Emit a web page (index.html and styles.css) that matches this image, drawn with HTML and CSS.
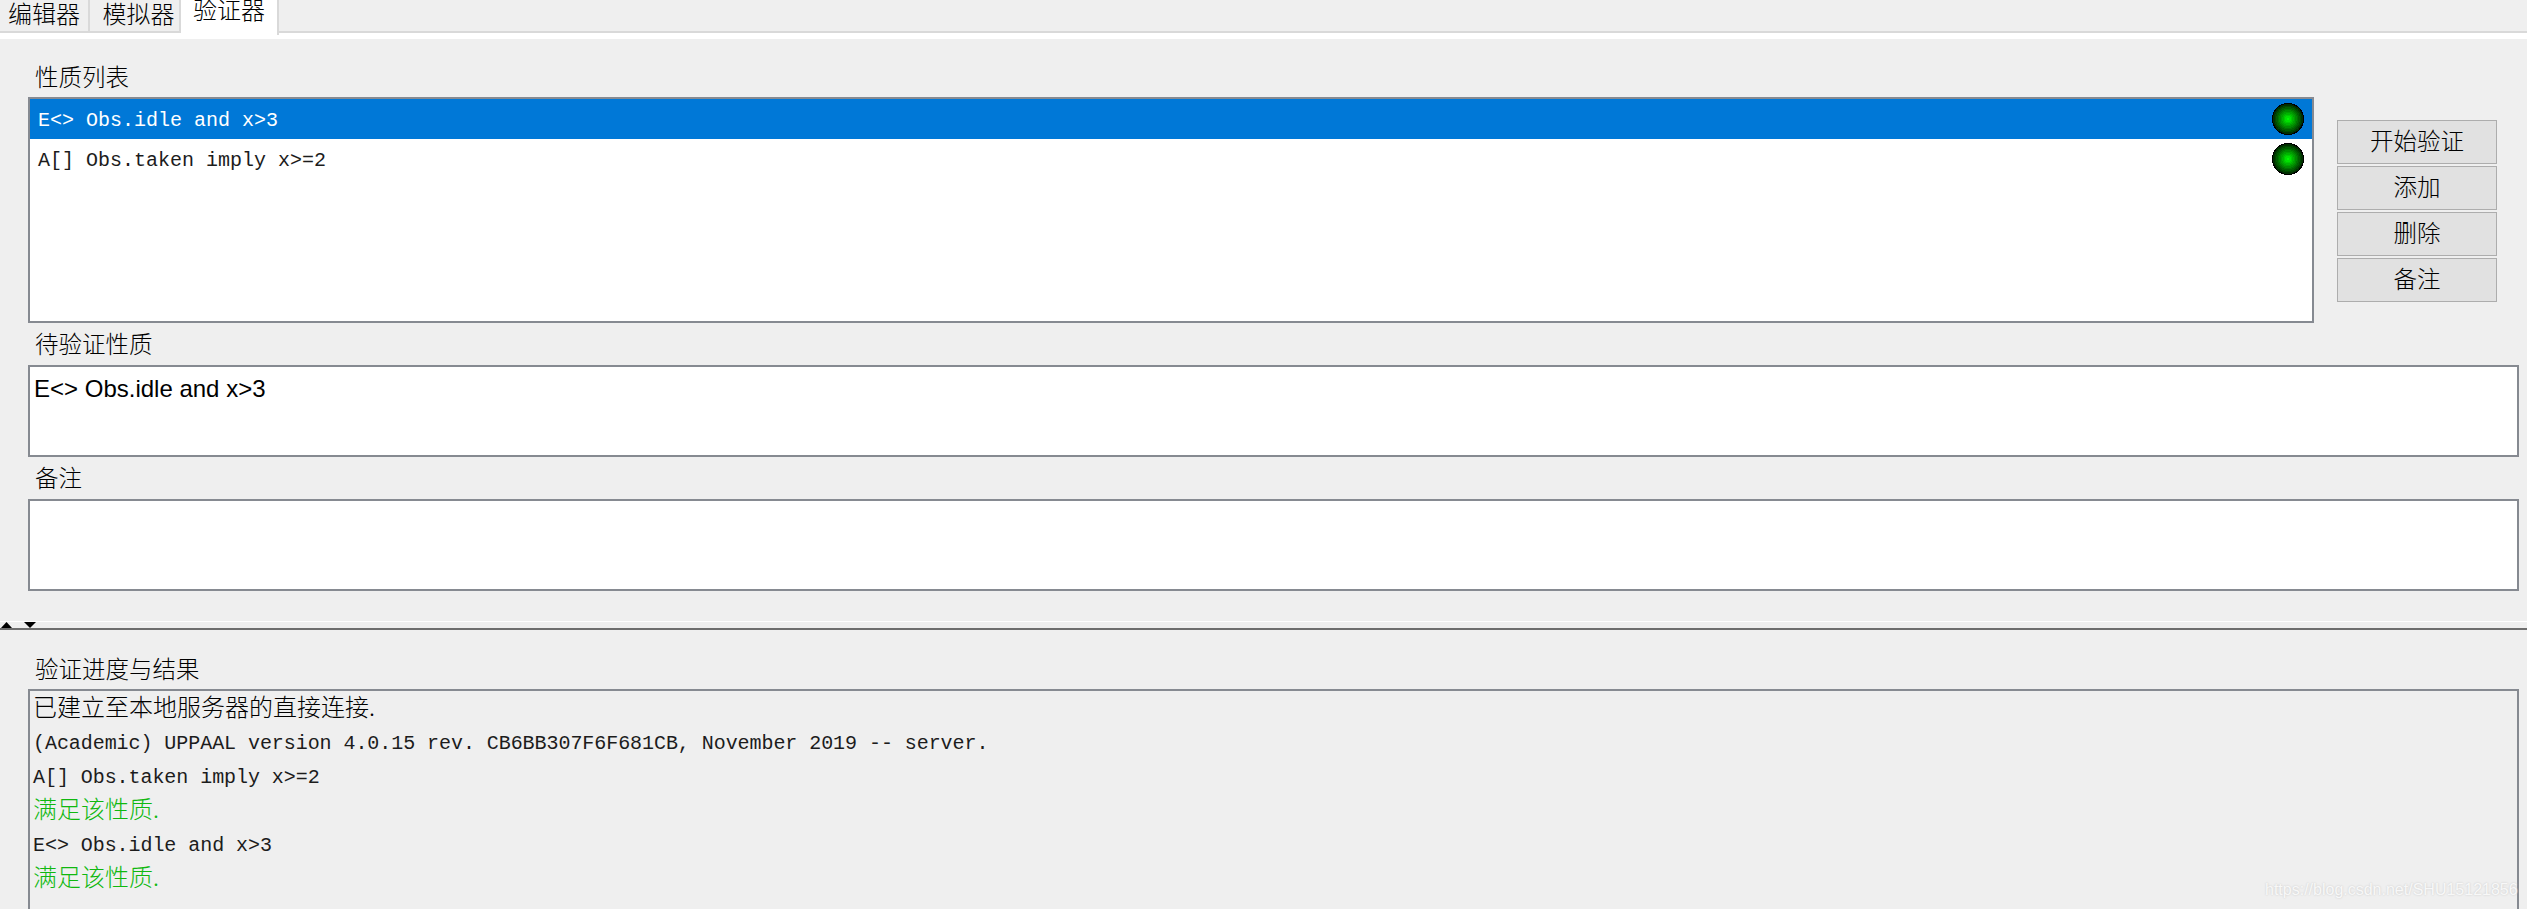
FILE: index.html
```html
<!DOCTYPE html>
<html lang="zh">
<head>
<meta charset="utf-8">
<title>验证器</title>
<link rel="stylesheet" href="styles.css">
</head>
<body>
<svg class="defs" width="0" height="0" aria-hidden="true">
  <symbol id="led" viewBox="0 0 32 32">
    <g shape-rendering="crispEdges">
      <circle cx="16" cy="16" r="16" fill="#000"/>
      <circle cx="16" cy="16" r="15" fill="#003000"/>
      <circle cx="16" cy="16" r="13.5" fill="#004800"/>
      <circle cx="16" cy="16" r="12" fill="#005e00"/>
      <circle cx="16" cy="16" r="10.5" fill="#007400"/>
      <circle cx="16" cy="16" r="9" fill="#008a00"/>
      <circle cx="16" cy="16" r="7.5" fill="#009f00"/>
      <circle cx="16" cy="16" r="6" fill="#00b400"/>
      <circle cx="16" cy="16" r="4.5" fill="#00ca00"/>
      <circle cx="16" cy="16" r="3" fill="#00e000"/>
      <circle cx="16" cy="16" r="1.5" fill="#00f800"/>
    </g>
  </symbol>
</svg>
<div class="app">
  <nav class="tabs">
    <div class="tab tab-a">编辑器</div>
    <div class="tab tab-b">模拟器</div>
    <div class="tab tab-c active">验证器</div>
  </nav>
  <div class="strip"></div>
  <section class="upper">
    <h2 class="label label-first">性质列表</h2>
    <div class="list-row">
      <div class="list">
        <div class="item selected"><span class="mono">E&lt;&gt; Obs.idle and x&gt;3</span><svg class="led"><use href="#led"/></svg></div>
        <div class="item"><span class="mono">A[] Obs.taken imply x&gt;=2</span><svg class="led"><use href="#led"/></svg></div>
      </div>
      <div class="actions">
        <div class="btn">开始验证</div>
        <div class="btn">添加</div>
        <div class="btn">删除</div>
        <div class="btn">备注</div>
      </div>
    </div>
    <h2 class="label label-query">待验证性质</h2>
    <div class="box query">E&lt;&gt; Obs.idle and x&gt;3</div>
    <h2 class="label label-note">备注</h2>
    <div class="box note"></div>
  </section>
  <div class="splitter">
    <svg class="arrows" width="38" height="6" viewBox="0 0 38 6"><path d="M1 6 L6.5 0 L12 6Z" fill="#000"/><path d="M24 0 L36 0 L30 6Z" fill="#000"/></svg>
  </div>
  <section class="lower">
    <h2 class="label label-result">验证进度与结果</h2>
    <div class="log">
      <div class="line cn">已建立至本地服务器的直接连接.</div>
      <div class="line">(Academic) UPPAAL version 4.0.15 rev. CB6BB307F6F681CB, November 2019 -- server.</div>
      <div class="line">A[] Obs.taken imply x&gt;=2</div>
      <div class="line cn ok">满足该性质.</div>
      <div class="line">E&lt;&gt; Obs.idle and x&gt;3</div>
      <div class="line cn ok">满足该性质.</div>
    </div>
  </section>
  <div class="watermark">https://blog.csdn.net/SHU15121856</div>
</div>
</body>
</html>
```

FILE: styles.css
```css
* { box-sizing: border-box; }
html, body { margin: 0; height: 100%; }
body {
  background: #efefef;
  color: #1c1c1c;
  font-family: "Liberation Mono", "Noto Sans CJK SC", monospace;
  font-size: 20px;
  overflow: hidden;
}
.defs { position: absolute; }
.app { position: relative; width: 2527px; height: 909px; overflow: hidden; }

.tabs {
  display: flex;
  height: 33px;
  border-bottom: 2px solid #d9d9d9;
  color: #000;
  font-family: "Noto Sans CJK SC", sans-serif;
  font-size: 24px;
  font-weight: 300;
  line-height: 25px;
}
.tab { text-align: center; border-right: 2px solid #d9d9d9; height: 31px; }
.tab-a { width: 90px; }
.tab-b { width: 91px; padding-left: 8px; }
.tab-c {
  width: 98px;
  height: 35px;
  line-height: 18px;
  background: #fff;
}
.strip { height: 6px; background: #fff; }

.upper { padding: 0 8px 0 28px; }
.label {
  margin: 0 0 0 7px;
  color: #000;
  font-family: "Noto Sans CJK SC", sans-serif;
  font-size: 23.5px;
  font-weight: 300;
  line-height: 24px;
}
.label-first { padding-top: 25px; height: 58px; }
.label-query { padding-top: 8px; height: 42px; }
.label-note { padding-top: 8px; height: 42px; }

.list-row { display: flex; align-items: flex-start; }
.list {
  width: 2286px;
  height: 226px;
  border: 2px solid #868a91;
  background: #fff;
}
.item {
  display: flex;
  align-items: center;
  justify-content: space-between;
  height: 40px;
  padding: 0 8px;
}
.item.selected { background: #0078d7; color: #fff; }
.mono { margin-top: 2px; font-size: 20px; }
.led { width: 32px; height: 32px; display: block; }

.actions {
  display: flex;
  flex-direction: column;
  gap: 2px;
  margin: 23px 0 0 23px;
  width: 160px;
}
.btn {
  height: 44px;
  line-height: 39px;
  text-align: center;
  color: #000;
  background: #e1e1e1;
  border: 1px solid #adadad;
  font-family: "Noto Sans CJK SC", sans-serif;
  font-size: 23.5px;
  font-weight: 300;
}

.box {
  width: 2491px;
  height: 92px;
  border: 2px solid #868a91;
  background: #fff;
}
.query {
  padding: 8px 0 0 4px;
  color: #000;
  font-family: "Liberation Sans", sans-serif;
  font-size: 24px;
  line-height: 28px;
}

.splitter {
  position: relative;
  height: 9px;
  margin-top: 30px;
  border-top: 1px solid #fff;
  border-bottom: 2px solid #6e6e6e;
}
.arrows { position: absolute; left: 0; top: 0; }

.lower { padding: 0 8px 0 28px; }
.label-result { padding-top: 26px; height: 59px; }
.log {
  width: 2491px;
  height: 220px;
  border: 2px solid #868a91;
  border-bottom: 0;
  padding: 2px 0 0 3px;
}
.line {
  height: 34px;
  line-height: 34px;
  white-space: pre;
  letter-spacing: -0.06px;
}
.cn {
  color: #000;
  line-height: 25px;
  font-family: "Noto Sans CJK SC", sans-serif;
  font-size: 24px;
  font-weight: 300;
  letter-spacing: 0;
}
.ok { color: #10b810; }

.watermark {
  position: absolute;
  left: 2265px;
  top: 878px;
  color: #f8f8f8;
  font-family: "Liberation Sans", sans-serif;
  font-size: 16px;
  line-height: 24px;
  text-shadow: 0 0 2px #c4c4c4;
  white-space: nowrap;
}
```
